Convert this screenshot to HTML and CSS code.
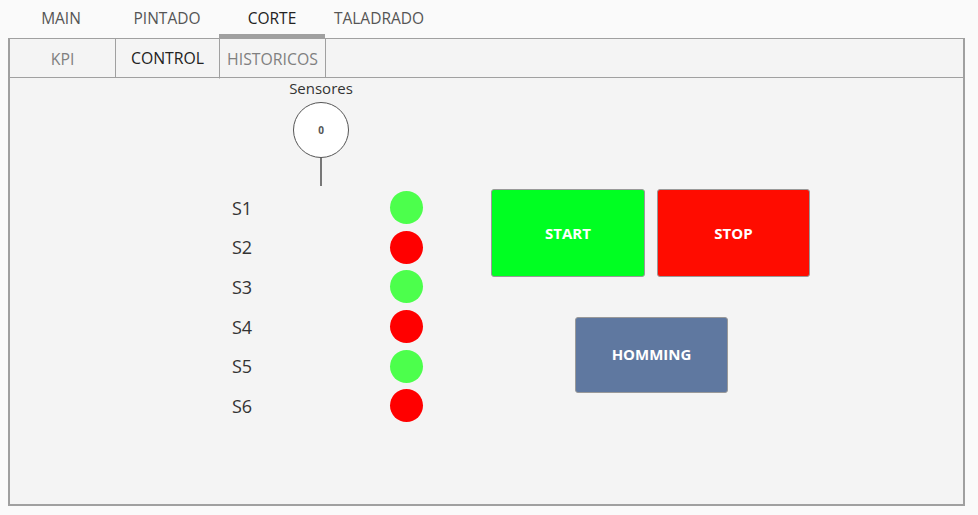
FILE: index.html
```html
<!DOCTYPE html>
<html>
<head>
<meta charset="utf-8">
<link rel="stylesheet" href="styles.css">
</head>
<body>
<nav class="nav">
  <div class="nav-tab">MAIN</div>
  <div class="nav-tab">PINTADO</div>
  <div class="nav-tab active">CORTE</div>
  <div class="nav-tab">TALADRADO</div>
</nav>
<section class="panel">
  <div class="subtabs">
    <div class="subtab kpi">KPI</div>
    <div class="subtab control active">CONTROL</div>
    <div class="subtab hist">HISTORICOS</div>
  </div>
  <div class="content">
    <div class="sensors">
      <div class="gauge">
        <div class="gauge-label">Sensores</div>
        <div class="gauge-circle">0</div>
        <div class="gauge-stem"></div>
      </div>
      <div class="sensor-list">
        <div class="s-label">S1</div><div class="led on"></div>
        <div class="s-label">S2</div><div class="led off"></div>
        <div class="s-label">S3</div><div class="led on"></div>
        <div class="s-label">S4</div><div class="led off"></div>
        <div class="s-label">S5</div><div class="led on"></div>
        <div class="s-label">S6</div><div class="led off"></div>
      </div>
    </div>
    <div class="controls">
      <div class="btn-row">
        <button class="btn start">START</button>
        <button class="btn stop">STOP</button>
      </div>
      <button class="btn homming">HOMMING</button>
    </div>
  </div>
</section>
</body>
</html>
```
FILE: styles.css
```css
* { box-sizing: border-box; }
html, body { margin: 0; padding: 0; }
body {
  background: #fafafa;
  font-family: "Open Sans", "Noto Sans", sans-serif;
  width: 978px;
  height: 515px;
  overflow: hidden;
}
.nav {
  display: flex;
  padding-left: 8px;
  height: 38px;
}
.nav-tab {
  width: 106px;
  height: 38px;
  border-bottom: 4px solid transparent;
  display: flex;
  align-items: center;
  justify-content: center;
  padding-top: 2px;
  font-size: 15.5px;
  color: #555;
}
.nav-tab.active {
  color: #222;
  border-bottom-color: #a0a0a0;
  margin-left: -1px;
  margin-right: 1px;
}
.panel {
  margin-left: 8px;
  width: 957px;
  height: 468px;
  border: 2px solid #a0a0a0;
  border-top-width: 1px;
  background: #f4f4f4;
}
.subtabs {
  display: flex;
  height: 39px;
  border-bottom: 1px solid #a0a0a0;
}
.subtab {
  height: 39px;
  display: flex;
  align-items: center;
  justify-content: center;
  padding-bottom: 0;
  font-size: 15.8px;
  color: #808080;
  border-right: 1px solid #a0a0a0;
}
.subtab.kpi { width: 106px; }
.subtab.control {
  width: 104px;
  color: #222;
  border-bottom: 1px solid #f4f4f4;
  height: 40px;
  margin-bottom: -1px;
  padding-bottom: 1px;
}
.subtab.hist { width: 106px; }
.content {
  display: flex;
  align-items: flex-start;
}
.sensors {
  margin-left: 222px;
  width: 191px;
}
.gauge {
  width: 178px;
  display: flex;
  flex-direction: column;
  align-items: center;
}
.gauge-label {
  font-size: 15px;
  line-height: 20px;
  color: #333;
}
.gauge-circle {
  margin-top: 4px;
  width: 56px;
  height: 56px;
  border-radius: 50%;
  border: 1px solid #555;
  background: #fff;
  display: flex;
  align-items: center;
  justify-content: center;
  font-size: 10px;
  font-weight: bold;
  color: #555;
}
.gauge-stem {
  width: 2px;
  height: 28px;
  background: #777;
}
.sensor-list {
  margin-top: 2px;
  display: grid;
  grid-template-columns: 158px 33px;
  grid-auto-rows: 39.6px;
  align-items: center;
}
.s-label {
  font-size: 18px;
  color: #333;
}
.led {
  width: 33px;
  height: 33px;
  border-radius: 50%;
}
.led.on { background: #4cff4c; }
.led.off { background: #ff0000; }
.controls {
  margin-left: 68px;
  margin-top: 111px;
  display: flex;
  flex-direction: column;
  align-items: center;
  gap: 40px;
}
.btn-row {
  display: flex;
  gap: 12px;
}
.btn {
  border: 1px solid #999;
  border-radius: 3px;
  color: #fff;
  font-family: "Open Sans", "Noto Sans", sans-serif;
  font-weight: bold;
  font-size: 15px;
  padding: 0;
  display: flex;
  align-items: center;
  justify-content: center;
}
.btn.start { width: 154px; height: 88px; background: #00ff22; }
.btn.stop { width: 153px; height: 88px; background: #ff0c00; }
.btn.homming { width: 153px; height: 76px; background: #5f78a0; margin-left: 2px; padding-bottom: 2px; }
```
